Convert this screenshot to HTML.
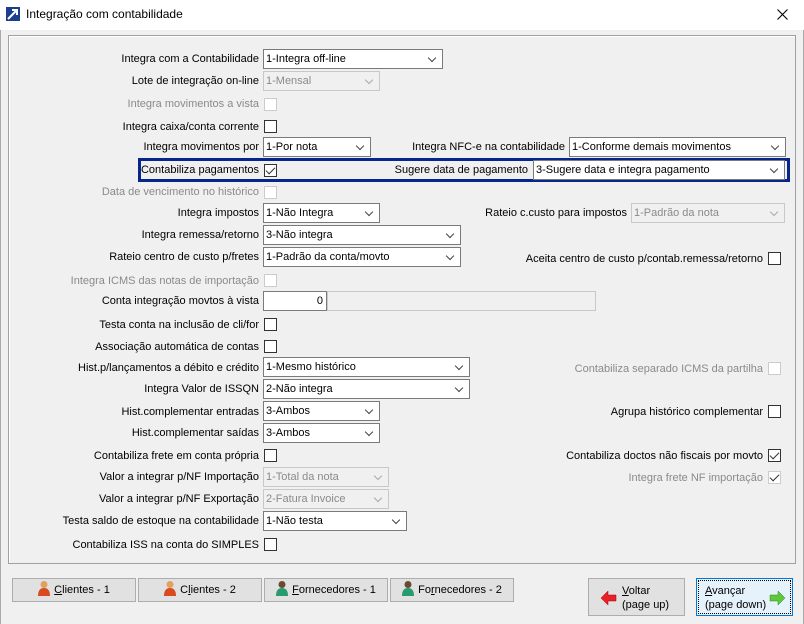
<!DOCTYPE html>
<html><head><meta charset="utf-8"><style>
*{box-sizing:border-box;margin:0;padding:0}
body{width:804px;height:624px;background:#f0f0f0;font-family:"Liberation Sans",sans-serif;font-size:11px;color:#000;position:relative;overflow:hidden}
.a{position:absolute;white-space:nowrap}
.l{position:absolute;white-space:nowrap;text-align:right;line-height:14px}
.dis{color:#8a8a8a}
.cb{position:absolute;width:13px;height:13px;border:1px solid #333;background:#fff}
.cb.d{border-color:#ccc}
.cmb{position:absolute;height:20px;border:1px solid #7a7a7a;background:#fff;padding:2px 0 0 2px;line-height:14px;white-space:nowrap}
.cmb.d{border-color:#c8c8c8;background:#f0f0f0;color:#8a8a8a}
.cmb::after{content:"";position:absolute;right:7px;top:5px;width:5px;height:5px;border-right:1px solid #444;border-bottom:1px solid #444;transform:rotate(45deg)}
.cmb.d::after{border-color:#aaa}
.ck::after{content:"";position:absolute;left:3px;top:0px;width:4px;height:8px;border-right:1.5px solid #333;border-bottom:1.5px solid #333;transform:rotate(45deg)}
.btn{position:absolute;height:24px;border:1px solid #adadad;background:#e1e1e1;line-height:22px;text-align:center}
.btn svg{vertical-align:-3px;margin-right:4px}
</style></head><body>
<div class="a" style="left:0;top:0;width:804px;height:30px;background:#fff"></div>
<svg class="a" style="left:6px;top:7px" width="14" height="14"><rect width="14" height="14" fill="#1a3f8f"/><path d="M2 12 L11 3 M6 3 H11 V8" stroke="#fff" stroke-width="2" fill="none"/></svg>
<div class="a" style="left:26px;top:7px;font-size:12px">Integração com contabilidade</div>
<svg class="a" style="left:777px;top:9px" width="11" height="11"><path d="M0.5 0.5L10.5 10.5M10.5 0.5L0.5 10.5" stroke="#000" stroke-width="1.1"/></svg>
<div class="a" style="left:0;top:30px;width:1px;height:594px;background:#aaa"></div>
<div class="a" style="left:803px;top:30px;width:1px;height:594px;background:#aaa"></div>
<div class="a" style="left:8px;top:35px;width:788px;height:529px;border:1px solid #a0a0a0;box-shadow:inset 1px 1px 0 #fff"></div>

<div class="a" style="left:138px;top:158px;width:652px;height:24px;border:3px solid #06268c"></div>

<div class="l" style="right:545px;top:52px">Integra com a Contabilidade</div>
<div class="cmb" style="left:263px;top:49px;width:180px">1-Integra off-line</div>
<div class="l" style="right:545px;top:74px">Lote de integração on-line</div>
<div class="cmb d" style="left:263px;top:71px;width:117px">1-Mensal</div>
<div class="l dis" style="right:545px;top:97px">Integra movimentos a vista</div>
<div class="cb d" style="left:264px;top:98px"></div>
<div class="l" style="right:545px;top:120px">Integra caixa/conta corrente</div>
<div class="cb" style="left:264px;top:120px"></div>
<div class="l" style="right:545px;top:140px">Integra movimentos por</div>
<div class="cmb" style="left:263px;top:137px;width:108px">1-Por nota</div>
<div class="l" style="right:239px;top:140px">Integra NFC-e na contabilidade</div>
<div class="cmb" style="left:569px;top:137px;width:217px">1-Conforme demais movimentos</div>
<div class="l" style="right:545px;top:163px">Contabiliza pagamentos</div>
<div class="cb ck" style="left:264px;top:164px"></div>
<div class="l" style="right:276px;top:163px">Sugere data de pagamento</div>
<div class="cmb" style="left:533px;top:160px;width:252px">3-Sugere data e integra pagamento</div>
<div class="l dis" style="right:545px;top:185px">Data de vencimento no histórico</div>
<div class="cb d" style="left:264px;top:186px"></div>
<div class="l" style="right:545px;top:206px">Integra impostos</div>
<div class="cmb" style="left:263px;top:203px;width:117px">1-Não Integra</div>
<div class="l" style="right:177px;top:206px">Rateio c.custo para impostos</div>
<div class="cmb d" style="left:631px;top:203px;width:154px">1-Padrão da nota</div>
<div class="l" style="right:545px;top:228px">Integra remessa/retorno</div>
<div class="cmb" style="left:263px;top:225px;width:198px">3-Não integra</div>
<div class="l" style="right:545px;top:250px">Rateio centro de custo p/fretes</div>
<div class="cmb" style="left:263px;top:247px;width:198px">1-Padrão da conta/movto</div>
<div class="l" style="right:41px;top:252px">Aceita centro de custo p/contab.remessa/retorno</div>
<div class="cb" style="left:768px;top:252px"></div>
<div class="l dis" style="right:545px;top:274px">Integra ICMS das notas de importação</div>
<div class="cb d" style="left:264px;top:274px"></div>
<div class="l" style="right:545px;top:294px">Conta integração movtos à vista</div>
<div class="a" style="left:263px;top:291px;width:64px;height:20px;border:1px solid #7a7a7a;background:#fff;text-align:right;padding:2px 3px 0 0;line-height:14px">0</div>
<div class="a" style="left:327px;top:291px;width:269px;height:20px;border:1px solid #c8c8c8;background:#f0f0f0"></div>
<div class="l" style="right:545px;top:318px">Testa conta na inclusão de cli/for</div>
<div class="cb" style="left:264px;top:318px"></div>
<div class="l" style="right:545px;top:340px">Associação automática de contas</div>
<div class="cb" style="left:264px;top:340px"></div>
<div class="l" style="right:545px;top:361px">Hist.p/lançamentos a débito e crédito</div>
<div class="cmb" style="left:263px;top:357px;width:207px">1-Mesmo histórico</div>
<div class="l dis" style="right:41px;top:362px">Contabiliza separado ICMS da partilha</div>
<div class="cb d" style="left:768px;top:362px"></div>
<div class="l" style="right:545px;top:382px">Integra Valor de ISSQN</div>
<div class="cmb" style="left:263px;top:379px;width:207px">2-Não integra</div>
<div class="l" style="right:545px;top:405px">Hist.complementar entradas</div>
<div class="cmb" style="left:263px;top:401px;width:117px">3-Ambos</div>
<div class="l" style="right:41px;top:405px">Agrupa histórico complementar</div>
<div class="cb" style="left:768px;top:405px"></div>
<div class="l" style="right:545px;top:426px">Hist.complementar saídas</div>
<div class="cmb" style="left:263px;top:423px;width:117px">3-Ambos</div>
<div class="l" style="right:545px;top:449px">Contabiliza frete em conta própria</div>
<div class="cb" style="left:264px;top:449px"></div>
<div class="l" style="right:41px;top:449px">Contabiliza doctos não fiscais por movto</div>
<div class="cb ck" style="left:768px;top:449px"></div>
<div class="l" style="right:545px;top:470px">Valor a integrar p/NF Importação</div>
<div class="cmb d" style="left:263px;top:467px;width:126px">1-Total da nota</div>
<div class="l dis" style="right:41px;top:471px">Integra frete NF importação</div>
<div class="cb d ck" style="left:768px;top:471px"></div>
<div class="l" style="right:545px;top:492px">Valor a integrar p/NF Exportação</div>
<div class="cmb d" style="left:263px;top:489px;width:126px">2-Fatura Invoice</div>
<div class="l" style="right:545px;top:514px">Testa saldo de estoque na contabilidade</div>
<div class="cmb" style="left:263px;top:511px;width:144px">1-Não testa</div>
<div class="l" style="right:545px;top:538px">Contabiliza ISS na conta do SIMPLES</div>
<div class="cb" style="left:264px;top:538px"></div>

<div class="btn" style="left:12px;top:578px;width:124px"><svg width="12" height="16"><circle cx="6" cy="4.5" r="3.5" fill="#e0a060"/><path d="M0 16 Q0 8 6 8 Q12 8 12 16Z" fill="#d94a20"/></svg><u>C</u>lientes - 1</div>
<div class="btn" style="left:138px;top:578px;width:124px"><svg width="12" height="16"><circle cx="6" cy="4.5" r="3.5" fill="#e0a060"/><path d="M0 16 Q0 8 6 8 Q12 8 12 16Z" fill="#d94a20"/></svg>C<u>l</u>ientes - 2</div>
<div class="btn" style="left:264px;top:578px;width:124px"><svg width="12" height="16"><circle cx="6" cy="4.5" r="3.5" fill="#6a4a30"/><path d="M0 16 Q0 8 6 8 Q12 8 12 16Z" fill="#2a9a70"/></svg><u>F</u>ornecedores - 1</div>
<div class="btn" style="left:390px;top:578px;width:124px"><svg width="12" height="16"><circle cx="6" cy="4.5" r="3.5" fill="#6a4a30"/><path d="M0 16 Q0 8 6 8 Q12 8 12 16Z" fill="#2a9a70"/></svg>Fo<u>r</u>necedores - 2</div>
<div class="btn" style="left:588px;top:578px;width:97px;height:38px;line-height:14px;text-align:left;padding:5px 0 0 33px"><svg class="a" style="left:12px;top:12px;margin:0" width="16" height="14"><path d="M0 7 L7 0 V4 H15 V10 H7 V14Z" fill="#e8202a" stroke="#a00" stroke-width="0.5"/></svg><u>V</u>oltar<br>(page up)</div>
<div class="btn" style="left:696px;top:578px;width:97px;height:38px;line-height:14px;text-align:left;padding:5px 0 0 8px;background:#e5f1fb;border:1px solid #0078d7;outline:1px dotted #000;outline-offset:-3px"><svg class="a" style="left:72px;top:12px;margin:0" width="16" height="14"><path d="M16 7 L9 0 V4 H1 V10 H9 V14Z" fill="#5ec83a" stroke="#2a8a20" stroke-width="0.5"/></svg><u>A</u>vançar<br>(page down)</div>
</body></html>
